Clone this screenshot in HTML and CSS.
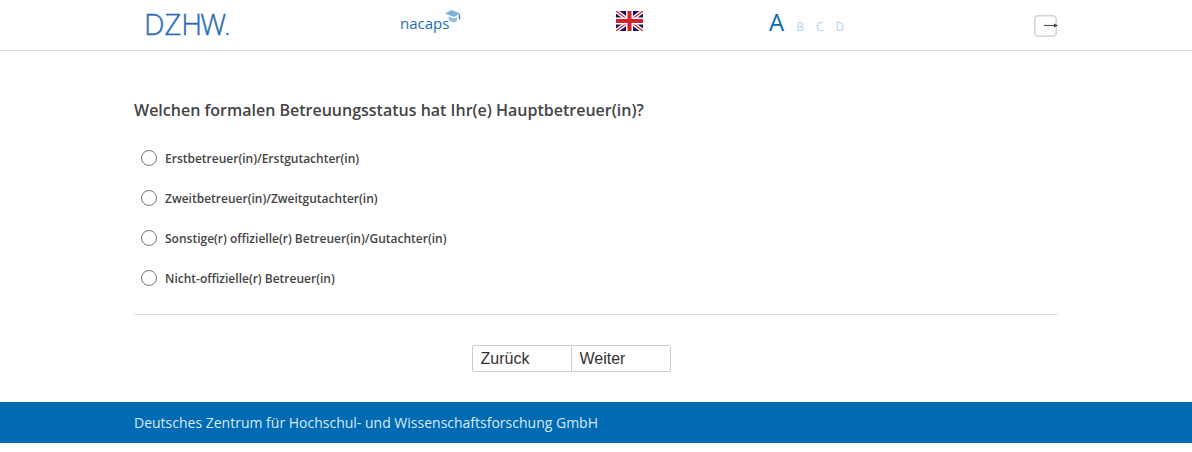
FILE: index.html
```html
<!DOCTYPE html>
<html lang="de">
<head>
<meta charset="utf-8">
<title>Betreuungsstatus</title>
<link rel="stylesheet" href="styles.css">
</head>
<body>
<header class="topbar">
  <div class="topbar-inner">
    <div class="logo-dzhw"><span>DZH</span><span class="logo-w">W</span><span class="dot">.</span></div>
    <div class="logo-nacaps">
      <span>nacaps</span>
      <svg class="cap" width="17" height="13" viewBox="0 0 17 13"><path d="M7.500 0 16.500 3.500 10 7 1 3.500Z" fill="#7fb2d9"/><path d="M4.500 6.500 10 8.500 13 7V11L9.500 12.500 5 10.500Z" fill="#8fbcdf"/><path d="M15.500 4.500V9.500" stroke="#2f7fbd" stroke-width="1.400"/></svg>
    </div>
    <div class="flag-cell">
      <svg class="flag" width="27" height="20" viewBox="0 0 27 20">
        <rect width="27" height="20" fill="#14145f"/>
        <path d="M0 0 27 20M27 0 0 20" stroke="#fff" stroke-width="4"/>
        <path d="M0 0 27 20M27 0 0 20" stroke="#d3202a" stroke-width="1.300"/>
        <path d="M13.500 0V20M0 10H27" stroke="#fff" stroke-width="7"/>
        <path d="M13.500 0V20M0 10H27" stroke="#d3202a" stroke-width="4"/>
      </svg>
    </div>
    <div class="font-size">
      <span class="size-a">A</span>
      <span class="size-o">B</span>
      <span class="size-o">C</span>
      <span class="size-o">D</span>
    </div>
    <button class="logout" type="button" aria-label="Abmelden">
      <svg width="26" height="23" viewBox="0 0 26 23"><rect x="1.750" y="1.750" width="21.500" height="20.500" rx="3.500" fill="#fff" stroke="#d4d4d4" stroke-width="1.500"/><path d="M11 11.500H21" stroke="#555" stroke-width="1.200"/><path d="M21 9.500 25 11.500 21 13.500Z" fill="#444"/></svg>
    </button>
  </div>
</header>

<main class="content">
  <h1 class="question">Welchen formalen Betreuungsstatus hat Ihr(e) Hauptbetreuer(in)?</h1>
  <ul class="options">
    <li class="option"><span class="radio"></span><span>Erstbetreuer(in)/Erstgutachter(in)</span></li>
    <li class="option"><span class="radio"></span><span>Zweitbetreuer(in)/Zweitgutachter(in)</span></li>
    <li class="option"><span class="radio"></span><span>Sonstige(r) offizielle(r) Betreuer(in)/Gutachter(in)</span></li>
    <li class="option"><span class="radio"></span><span>Nicht-offizielle(r) Betreuer(in)</span></li>
  </ul>
  <hr class="rule">
  <div class="nav-buttons">
    <button class="nav-btn" type="button">Zurück</button>
    <button class="nav-btn" type="button">Weiter</button>
  </div>
</main>

<footer class="footer">
  <div class="footer-inner">Deutsches Zentrum für Hochschul- und Wissenschaftsforschung GmbH</div>
</footer>
</body>
</html>
```

FILE: styles.css
```css
* { box-sizing: border-box; }
html, body { margin: 0; padding: 0; background: #fff; }
body { font-family: "Open Sans", sans-serif; color: #444; }

.topbar { height: 51px; border-bottom: 1px solid #ddd; }
.topbar-inner {
  width: 924px;
  height: 50px;
  margin: 0 auto;
  display: grid;
  grid-template-columns: 266px 216px 153px 264px 25px;
  align-items: center;
}
.logo-dzhw {
  display: flex;
  align-items: baseline;
  padding: 0 0 2px 10px;
  font-family: "Open Sans", sans-serif;
  font-weight: 300;
  font-size: 29px;
  line-height: 48px;
  letter-spacing: 0.1px;
  color: #2a6db5;
  -webkit-text-stroke: 0.4px #2a6db5;
}
.logo-w { margin-left: -2px; letter-spacing: -1px; }
.logo-dzhw .dot { font-size: 16px; font-weight: 400; }
.logo-nacaps {
  display: flex;
  align-items: flex-start;
  color: #1c70b5;
  font-size: 15px;
  line-height: 22px;
  margin-top: -10px;
}
.logo-nacaps .cap { margin: -2px 0 0 -5px; }
.flag-cell { display: flex; padding-bottom: 10px; margin-top: -4px; }
.font-size { display: flex; align-items: baseline; color: #0069b4; margin-top: -11px; }
.size-a { font-size: 24px; line-height: 34px; margin-right: 12px; }
.size-o { font-size: 12px; margin-right: 12px; color: #b3d4ec; }
.logout {
  display: flex;
  padding: 0;
  border: 0;
  background: none;
  width: 26px;
  height: 23px;
  margin-bottom: 5px;
}

.content { width: 924px; margin: 0 auto; }
.question {
  margin: 0;
  padding-top: 48px;
  font-size: 16px;
  font-weight: 600;
  line-height: 22px;
  color: #444;
}
.options { list-style: none; margin: 17px 0 0; padding: 0; }
.option {
  height: 40px;
  display: flex;
  align-items: center;
  padding-left: 7px;
  font-size: 12px;
  font-weight: 600;
  color: #444;
}
.radio {
  width: 16px;
  height: 16px;
  margin-right: 8px;
  border: 1px solid #777;
  border-radius: 50%;
  background: #fff;
}
.rule { margin: 16px 0 0; border: 0; border-top: 1px solid #ddd; }

.nav-buttons { display: flex; justify-content: center; padding: 30px 50px 0 0; }
.nav-btn {
  width: 100px;
  height: 27px;
  padding: 0 0 0 8px;
  border: 1px solid #ccc;
  background: #fff;
  color: #333;
  font-family: "Liberation Sans", sans-serif;
  font-size: 16px;
  text-align: left;
}
.nav-btn:first-child { border-radius: 2px 0 0 2px; }
.nav-btn:last-child { border-radius: 0 2px 2px 0; margin-left: -1px; }

.footer { margin-top: 30px; height: 41px; background: #006ab3; }
.footer-inner {
  width: 924px;
  margin: 0 auto;
  font-size: 14px;
  line-height: 41px;
  color: #d9e9f5;
}
```
